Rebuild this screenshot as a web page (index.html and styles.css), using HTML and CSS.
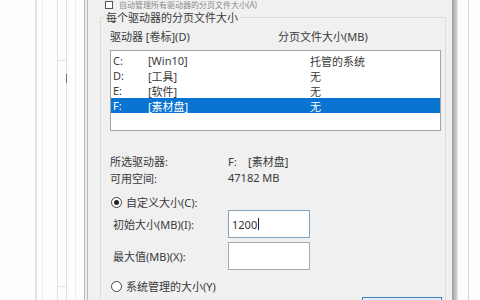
FILE: index.html
```html
<!DOCTYPE html>
<html lang="zh-CN">
<head>
<meta charset="utf-8">
<title>虚拟内存</title>
<link rel="stylesheet" href="styles.css">
</head>
<body>
<div class="screen">
  <div class="backdrop">
    <div class="strip s1"></div>
    <div class="strip s2"><div class="tick t1"></div><div class="mark"></div><div class="tick t2"></div></div>
    <div class="strip s3"></div>
  </div>
  <div class="dialog">
    <div class="topcheck"><span class="cb"></span><span class="cbtext">自动管理所有驱动器的分页文件大小(A)</span></div>
    <fieldset class="group">
      <legend>每个驱动器的分页文件大小</legend>
      <div class="head"><span class="hc1">驱动器 [卷标](D)</span><span class="hc2">分页文件大小(MB)</span></div>
      <div class="list">
        <div class="row"><span class="c1">C:</span><span class="c2">[Win10]</span><span class="c3">托管的系统</span></div>
        <div class="row"><span class="c1">D:</span><span class="c2">[工具]</span><span class="c3">无</span></div>
        <div class="row"><span class="c1">E:</span><span class="c2">[软件]</span><span class="c3">无</span></div>
        <div class="row sel"><span class="c1">F:</span><span class="c2">[素材盘]</span><span class="c3">无</span></div>
      </div>
      <div class="info first"><span class="il">所选驱动器:</span><span class="iv">F:&nbsp;&nbsp;&nbsp;&nbsp;[素材盘]</span></div>
      <div class="info"><span class="il">可用空间:</span><span class="iv">47182 MB</span></div>
      <div class="radio r1"><span class="dot on"></span><span>自定义大小(C):</span></div>
      <div class="field"><span class="fl">初始大小(MB)(I):</span><span class="input focus">1200<span class="caret"></span></span></div>
      <div class="field f2"><span class="fl">最大值(MB)(X):</span><span class="input"></span></div>
      <div class="radio r2"><span class="dot"></span><span>系统管理的大小(Y)</span></div>
      <div class="btnrow"><span class="btn"></span></div>
    </fieldset>
  </div>
  <div class="rightedge">
    <div class="edge"></div>
    <div class="gap"></div>
    <div class="line"></div>
  </div>
</div>
</body>
</html>
```
FILE: styles.css
```css
html, body { margin: 0; padding: 0; }
body {
  width: 480px; height: 300px; overflow: hidden; background: #fdfdfd;
  font-family: "Noto Sans", "Noto Sans CJK SC", sans-serif;
  font-size: 11px; color: #3a3a3a;
}
.screen { display: flex; height: 300px; overflow: hidden; }

.backdrop { width: 84px; flex: none; display: flex; padding-left: 35px; box-sizing: border-box; }
.strip { height: 300px; box-sizing: border-box; }
.s1 { width: 8px; border-left: 2px solid #e2e2e2; border-right: 1px solid #ececec; }
.s2 { width: 10px; margin-left: 14px; border-left: 1px solid #e0e0e0; border-right: 1px solid #e0e0e0; display: flex; flex-direction: column; }
.tick { height: 1px; background: #e4e4e4; }
.t1 { margin-top: 60px; }
.mark { width: 1px; height: 9px; background: #777; margin: 13px 0 0 8px; }
.t2 { margin-top: 203px; }
.s3 { width: 0; margin-left: 8px; border-left: 1px solid #f0f0f0; }

.dialog {
  width: 368px; flex: none; background: #f0f0f0; box-sizing: border-box;
  border-left: 4px double #b9b9b9;
  padding-left: 12px; overflow: hidden; height: 300px;
}
.topcheck { height: 10px; display: flex; align-items: center; padding-left: 5px; font-size: 8px; line-height: 10px; }
.cb { width: 8px; height: 8px; border: 1px solid #555; background: #fff; box-sizing: border-box; }
.cbtext { margin-left: 6px; color: #8a8a8a; }

.group {
  margin: 1px 0 0 0; width: 346px; box-sizing: border-box;
  border: 1px solid #dcdcdc; padding: 0 3px 0 9px; min-width: 0;
}
.group legend { padding: 0 2px; margin-left: -6px; line-height: 13px; }
.head { display: flex; height: 17px; align-items: center; margin-top: 3px; }
.hc1 { width: 168px; }
.list {
  margin-top: 6px; height: 81px; box-sizing: border-box; background: #fff;
  border: 1px solid #a4a4a4; padding: 2px 0 0 0; margin-right: 1px;
}
.row { height: 15px; display: flex; align-items: center; padding-left: 2px; }
.row .c1 { width: 35px; }
.row .c2 { width: 162px; }
.sel { background: #0a74d3; color: #fff; }

.info { height: 17px; display: flex; align-items: center; }
.info.first { margin-top: 21px; }
.il { width: 118px; }
.radio { height: 16px; display: flex; align-items: center; }
.r1 { margin-top: 8px; }
.r2 { margin-top: 8px; }
.dot {
  width: 11px; height: 11px; border: 1px solid #444; border-radius: 50%;
  box-sizing: border-box; background: #fff; margin: 0 4px 0 1px; display: flex; align-items: center; justify-content: center;
}
.dot.on::after { content: ""; width: 5px; height: 5px; border-radius: 50%; background: #222; }
.field { height: 28px; display: flex; align-items: center; padding-left: 3px; }
.f2 { margin-top: 4px; }
.fl { width: 115px; }
.input {
  width: 82px; height: 28px; box-sizing: border-box; background: #fff;
  border: 1px solid #a9a9a9; display: flex; align-items: center; padding-left: 3px; color: #333;
}
.input.focus { border-color: #7ea6c4; }
.caret { width: 1px; height: 12px; background: #222; margin-left: 1px; }
.btnrow { display: flex; justify-content: flex-end; margin-top: 3px; padding-right: 0; }
.btn { width: 80px; height: 20px; border: 1px solid #3b86c6; background: #e1eef9; box-sizing: border-box; margin-right: 0px; }

.rightedge { flex: 1; display: flex; }
.edge { width: 6px; background: linear-gradient(to right, #9c9c9c, #c4c4c4 60%, #e6e6e6); }
.gap { width: 10px; }
.line { width: 1px; background: #d6d6d6; }
```
